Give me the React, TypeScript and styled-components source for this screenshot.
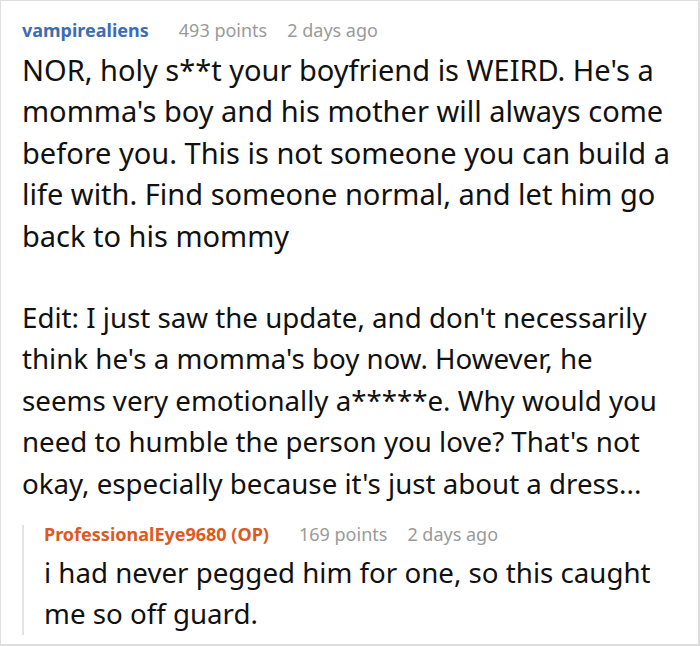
import React, { FC } from "react";
import styled, { createGlobalStyle } from "styled-components";

type Paragraph = { text: string; size: number };

type CommentData = {
  author: string;
  points: number;
  age: string;
  paragraphs: Paragraph[];
  isOp?: boolean;
};

const main: CommentData = {
  author: "vampirealiens",
  points: 493,
  age: "2 days ago",
  paragraphs: [
    {
      text: "NOR, holy s**t your boyfriend is WEIRD. He's a momma's boy and his mother will always come before you. This is not someone you can build a life with. Find someone normal, and let him go back to his mommy",
      size: 29,
    },
    {
      text: "Edit: I just saw the update, and don't necessarily think he's a momma's boy now. However, he seems very emotionally a*****e. Why would you need to humble the person you love? That's not okay, especially because it's just about a dress...",
      size: 27.7,
    },
  ],
};

const reply: CommentData = {
  author: "ProfessionalEye9680 (OP)",
  points: 169,
  age: "2 days ago",
  isOp: true,
  paragraphs: [{ text: "i had never pegged him for one, so this caught me so off guard.", size: 27.7 }],
};

const Comment: FC<{ data: CommentData; nested?: boolean }> = ({ data, nested }) => (
  <>
    <Meta $nested={nested}>
      <Author $op={data.isOp}>{data.author}</Author>
      <Info>{data.points} points</Info>
      <Info>{data.age}</Info>
    </Meta>
    {data.paragraphs.map((p, i) => (
      <Para key={i} $size={p.size}>
        {p.text}
      </Para>
    ))}
  </>
);

const App: FC = () => {
  return (
    <>
      <GlobalStyle />
      <Card>
        <Comment data={main} />
        <Reply>
          <Comment data={reply} nested />
        </Reply>
      </Card>
    </>
  );
};

export default App;

const GlobalStyle = createGlobalStyle`
  body {
    margin: 0;
    background: #fff;
    font-family: "Noto Sans", "Open Sans", sans-serif;
  }
`;

const Card = styled.div`
  box-sizing: border-box;
  width: 700px;
  height: 646px;
  overflow: hidden;
  border: 1px solid #dedede;
  border-width: 1px 2px 2px 1px;
  padding: 14px 16px 0 21px;
  color: #111;
`;

const Meta = styled.div<{ $nested?: boolean }>`
  display: flex;
  align-items: baseline;
  gap: 20px;
  font-size: 18px;
  line-height: ${(p) => (p.$nested ? "18px" : "30px")};
  margin-bottom: ${(p) => (p.$nested ? "9px" : "4px")};
`;

const Author = styled.span<{ $op?: boolean }>`
  font-weight: 700;
  margin-right: 10px;
  color: ${(p) => (p.$op ? "#dd5a1f" : "#3c6cb5")};
`;

const Info = styled.span`
  color: #9a9a9a;
`;

const Para = styled.p<{ $size: number }>`
  margin: 0;
  font-size: ${(p) => p.$size}px;
  line-height: 41.4px;
  & + & {
    margin-top: 41px;
  }
`;

const Reply = styled.div`
  margin-top: 21px;
  border-left: 2px solid #e4e4e4;
  padding-left: 20px;

  ${Para}:last-child {
    margin-bottom: -11px;
  }
`;
